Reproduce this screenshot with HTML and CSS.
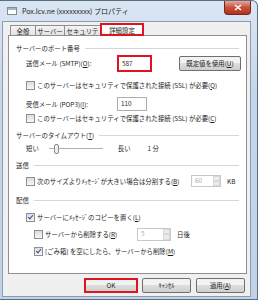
FILE: index.html
```html
<!DOCTYPE html>
<html lang="ja">
<head>
  <meta charset="UTF-8">
  <title>Pox.lcv.ne プロパティ</title>
  <link rel="stylesheet" href="styles.css">
</head>
<body>
  <div class="window">
    <div class="titlebar">
      <svg class="app-icon" width="12" height="12" viewBox="0 0 12 12">
        <rect x="1.5" y="2.5" width="9" height="7" fill="#fff" stroke="#8a8a8a"/>
        <rect x="2" y="3" width="8" height="2" fill="#9bb7d8"/>
      </svg>
      <span class="title">Pox.lcv.ne (xxxxxxxxx) プロパティ</span>
      <div class="close">
        <svg width="8" height="7" viewBox="0 0 8 7"><path d="M1 1 L7 6 M7 1 L1 6" stroke="#fff" stroke-width="1.6"/></svg>
      </div>
    </div>

    <div class="client">
      <div class="tabs">
        <div class="tab t1">全般</div>
        <div class="tab t2">サーバー</div>
        <div class="tab t3">セキュリティ</div>
        <div class="tab t4 active">詳細設定</div>
      </div>

      <div class="panel">
        <div class="group-title"><span>サーバーのポート番号</span></div>
        <div class="row smtp">
          <span class="label">送信メール (SMTP)(<u>O</u>):</span>
          <span class="input marked">587</span>
          <span class="spacer"></span>
          <span class="button">既定値を使用(<u>U</u>)</span>
        </div>
        <div class="row gap-l">
          <span class="check"></span>
          <span>このサーバーはセキュリティで保護された接続 (SSL) が必要(<u>Q</u>)</span>
        </div>
        <div class="row gap-l">
          <span class="label">受信メール (POP3)(<u>I</u>):</span>
          <span class="input">110</span>
        </div>
        <div class="row gap-xxs">
          <span class="check"></span>
          <span>このサーバーはセキュリティで保護された接続 (SSL) が必要(<u>C</u>)</span>
        </div>

        <div class="group-title gap-m"><span>サーバーのタイムアウト(<u>T</u>)</span></div>
        <div class="row slider-row">
          <span>短い</span>
          <span class="slider"><span class="thumb"></span></span>
          <span>長い</span>
          <span class="minutes">1 分</span>
        </div>

        <div class="group-title gap-m"><span>送信</span></div>
        <div class="row gap-s">
          <span class="check"></span>
          <span>次のサイズよりﾒｯｾｰｼﾞが大きい場合は分割する(<u>B</u>)</span>
          <span class="spin disabled"><span class="spin-val">60</span><span class="arrows"><i></i><i></i></span></span>
          <span class="unit">KB</span>
        </div>

        <div class="group-title gap-l"><span>配信</span></div>
        <div class="row gap-m">
          <span class="check on"></span>
          <span>サーバーにﾒｯｾｰｼﾞのコピーを置く(<u>L</u>)</span>
        </div>
        <div class="row indent gap-m">
          <span class="check"></span>
          <span class="del-label">サーバーから削除する(<u>R</u>)</span>
          <span class="spin days disabled"><span class="spin-val">5</span><span class="arrows"><i></i><i></i></span></span>
          <span class="unit">日後</span>
        </div>
        <div class="row indent gap-m">
          <span class="check on"></span>
          <span>[ごみ箱] を空にしたら、サーバーから削除(<u>M</u>)</span>
        </div>
      </div>

      <div class="actions">
        <span class="button ok">OK</span>
        <span class="button wide">ｷｬﾝｾﾙ</span>
        <span class="button wide">適用(<u>A</u>)</span>
      </div>
    </div>
  </div>
</body>
</html>
```

FILE: styles.css
```css
body {
  margin: 0;
  font-family: "Noto Sans CJK JP", "Noto Sans", sans-serif;
  font-size: 6.4px;
  color: #1e1e1e;
  background: #fff;
}

.window {
  width: 258px;
  height: 300px;
  box-sizing: border-box;
  border: 1px solid #5d6d82;
  border-left: none;
  border-radius: 0 6px 0 0;
  background: linear-gradient(#dbe6f3, #c6d6ea 30%, #c1d2e7);
  display: flex;
  flex-direction: column;
}

.titlebar {
  height: 20px;
  display: flex;
  align-items: center;
  padding: 0 6px 0 6px;
}

.app-icon {
  margin-right: 4px;
}

.title {
  font-size: 7px;
  color: #222;
  flex: 1;
}

.close {
  width: 25px;
  height: 13px;
  margin-top: -6px;
  border: 1px solid #6e2a22;
  border-top: none;
  border-radius: 0 0 4px 4px;
  background: linear-gradient(#e9a89a, #c7503a 50%, #b53019);
  display: flex;
  align-items: center;
  justify-content: center;
}

.client {
  flex: 1;
  margin: 0 6px 2px 2px;
  background: #f0f0f0;
  border: 1px solid #8b9bb0;
  display: flex;
  flex-direction: column;
  padding: 1px 3px 0 5px;
}

.tabs {
  display: flex;
  padding-left: 2px;
  height: 13px;
  align-items: flex-end;
  margin-bottom: -1px;
}

.tab {
  height: 11px;
  line-height: 11px;
  text-align: center;
  border: 1px solid #8e8f8f;
  border-bottom: none;
  background: linear-gradient(#f4f4f4, #e1e1e1);
  margin-right: -1px;
  box-sizing: border-box;
}

.t1 { width: 26px; }
.t2 { width: 30px; }
.t3 { width: 37px; }
.t4 { width: 44px; }

.tab.active {
  height: 13px;
  line-height: 12px;
  background: #fff;
  border: 2px solid #e0141e;
  position: relative;
  z-index: 1;
}

.panel {
  height: 239px;
  box-sizing: border-box;
  background: #fff;
  border: 1px solid #8e8f8f;
  padding: 6px 7px 0 7px;
  display: flex;
  flex-direction: column;
}

.group-title {
  display: flex;
  align-items: center;
  height: 12px;
  gap: 5px;
  white-space: nowrap;
}

.group-title::after {
  content: "";
  flex: 1;
  border-top: 1px solid #d6d6d6;
}

.row {
  display: flex;
  align-items: center;
  height: 12px;
  padding-left: 10px;
  white-space: nowrap;
}

.smtp {
  height: 17px;
  margin-top: 1px;
}

.gap-xxs { margin-top: 2px; }
.gap-s { margin-top: 4px; }
.gap-m { margin-top: 5px; }
.gap-l { margin-top: 7px; }

.label {
  width: 91px;
}

.input {
  width: 30px;
  height: 14px;
  line-height: 12px;
  border: 1px solid #abadb3;
  padding-left: 3px;
  box-sizing: border-box;
}

.input.marked {
  width: 35px;
  height: 17px;
  border: 2px solid #e0141e;
  line-height: 13px;
}

.spacer {
  flex: 1;
}

.button {
  height: 15px;
  line-height: 13px;
  box-sizing: border-box;
  padding: 0 4px;
  border: 1px solid #707070;
  border-radius: 2px;
  background: linear-gradient(#f2f2f2 45%, #dddddd 50%, #cfcfcf);
  text-align: center;
}

.smtp .button {
  width: 62px;
  margin-right: -2px;
}

.check {
  width: 7px;
  height: 7px;
  border: 1px solid #8f8f8f;
  background: linear-gradient(#dcdcdc, #f7f7f7);
  margin-right: 2px;
  flex: none;
  position: relative;
}

.check.on::after {
  content: "";
  position: absolute;
  left: 2px;
  top: 0;
  width: 2px;
  height: 4px;
  border: solid #2a4d9c;
  border-width: 0 1.5px 1.5px 0;
  transform: rotate(40deg);
}

.slider-row {
  height: 12px;
  margin-top: 1px;
}

.slider {
  width: 54px;
  margin: 0 15px 0 10px;
  border-top: 1px solid #b0b0b0;
  position: relative;
}

.thumb {
  position: absolute;
  left: 5px;
  top: -5px;
  width: 3px;
  height: 8px;
  border: 1px solid #8a8a8a;
  border-radius: 2px;
  background: #f0f0f0;
}

.minutes {
  margin-left: 17px;
}

.spin {
  margin-left: auto;
  width: 30px;
  height: 12px;
  border: 1px solid #c8c8c8;
  display: flex;
  box-sizing: border-box;
  color: #a8a8a8;
}

.del-label {
  width: 92px;
}

.spin.days {
  margin-left: 0;
  width: 34px;
  height: 13px;
}

.spin-val {
  flex: 1;
  padding-left: 3px;
  line-height: 10px;
}

.arrows {
  width: 7px;
  display: flex;
  flex-direction: column;
}

.arrows i {
  flex: 1;
  background: #ececec;
  border: 1px solid #d8d8d8;
}

.unit {
  margin-left: 6px;
  width: 12px;
}

.indent {
  padding-left: 18px;
}

.actions {
  display: flex;
  padding-top: 4px;
}

.button.wide {
  width: 49px;
  margin-left: 5px;
}

.button.ok {
  width: 54px;
  border: 2px solid #e0141e;
  border-radius: 0;
  line-height: 11px;
  margin-left: 76px;
}

.button.ok + .wide {
  margin-left: 4px;
}
```
